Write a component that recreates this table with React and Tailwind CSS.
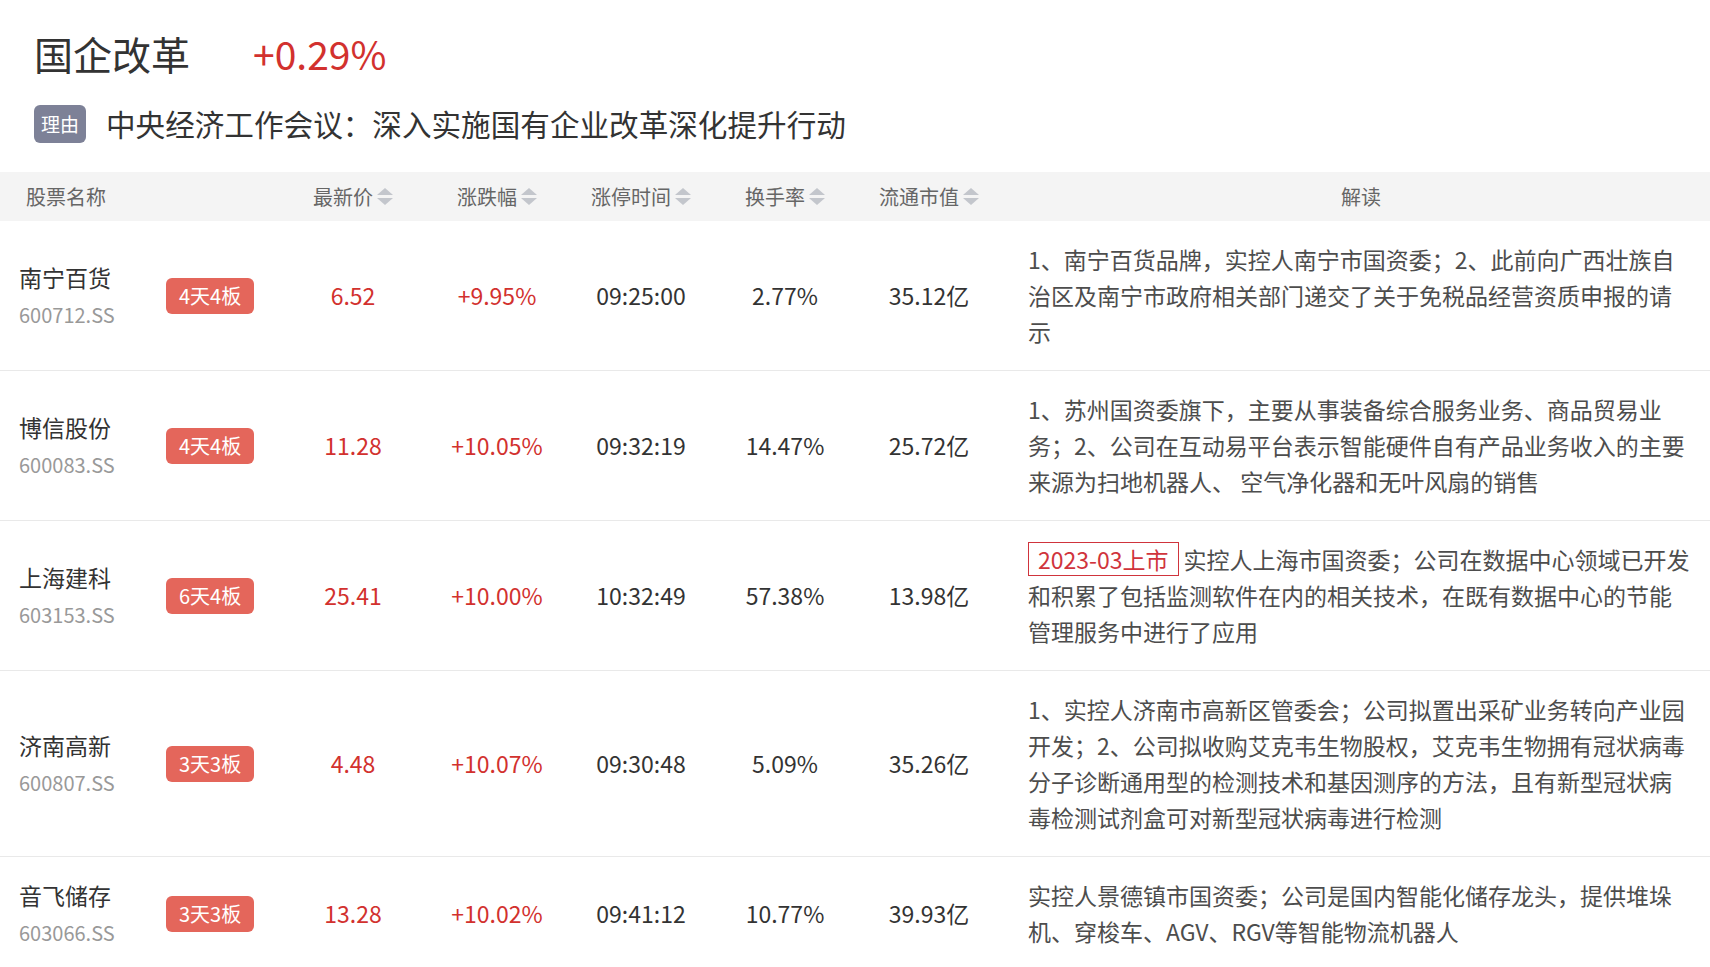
import React from 'react';

const stocks = [
  { name: '南宁百货', code: '600712.SS', tag: '4天4板', price: '6.52', change: '+9.95%', time: '09:25:00', turnover: '2.77%', cap: '35.12亿', note: '1、南宁百货品牌，实控人南宁市国资委；2、此前向广西壮族自治区及南宁市政府相关部门递交了关于免税品经营资质申报的请示' },
  { name: '博信股份', code: '600083.SS', tag: '4天4板', price: '11.28', change: '+10.05%', time: '09:32:19', turnover: '14.47%', cap: '25.72亿', note: '1、苏州国资委旗下，主要从事装备综合服务业务、商品贸易业务；2、公司在互动易平台表示智能硬件自有产品业务收入的主要来源为扫地机器人、 空气净化器和无叶风扇的销售' },
  { name: '上海建科', code: '603153.SS', tag: '6天4板', price: '25.41', change: '+10.00%', time: '10:32:49', turnover: '57.38%', cap: '13.98亿', listed: '2023-03上市', note: '实控人上海市国资委；公司在数据中心领域已开发和积累了包括监测软件在内的相关技术，在既有数据中心的节能管理服务中进行了应用' },
  { name: '济南高新', code: '600807.SS', tag: '3天3板', price: '4.48', change: '+10.07%', time: '09:30:48', turnover: '5.09%', cap: '35.26亿', note: '1、实控人济南市高新区管委会；公司拟置出采矿业务转向产业园开发；2、公司拟收购艾克韦生物股权，艾克韦生物拥有冠状病毒分子诊断通用型的检测技术和基因测序的方法，且有新型冠状病毒检测试剂盒可对新型冠状病毒进行检测' },
  { name: '音飞储存', code: '603066.SS', tag: '3天3板', price: '13.28', change: '+10.02%', time: '09:41:12', turnover: '10.77%', cap: '39.93亿', note: '实控人景德镇市国资委；公司是国内智能化储存龙头，提供堆垛机、穿梭车、AGV、RGV等智能物流机器人' },
];

const sortable = ['最新价', '涨跌幅', '涨停时间', '换手率', '流通市值'];

const cols = 'grid grid-cols-[150px_131px_144px_144px_144px_144px_144px_1fr]';

function SortIcon() {
  return (
    <svg width="16" height="18" viewBox="0 0 16 18" className="ml-[4px] shrink-0">
      <polygon points="8,0 16,7 0,7" fill="#c3c6cc" />
      <polygon points="0,10 16,10 8,17" fill="#c3c6cc" />
    </svg>
  );
}

export default function App() {
  return (
    <div className="min-h-screen bg-white font-['Noto_Sans_CJK_SC','Noto_Sans',sans-serif] text-[#333]">
      {/* title */}
      <div className="px-[34px] pt-[33px]">
        <div className="flex items-center h-[40px]">
          <h1 className="text-[39px] leading-[40px] text-[#333]">国企改革</h1>
          <span className="ml-[63px] text-[39px] leading-[40px] text-[#d2312e]">+0.29%</span>
        </div>
        <div className="flex items-center mt-[32px] h-[38px]">
          <span className="w-[52px] h-[38px] rounded-[6px] bg-[#7d8197] text-white text-[19px] flex items-center justify-center">理由</span>
          <span className="ml-[20px] text-[29.6px] leading-[38px] text-[#333]">中央经济工作会议：深入实施国有企业改革深化提升行动</span>
        </div>
      </div>

      {/* table */}
      <div className="mt-[29px]">
        <div className={`${cols} h-[49px] bg-[#f4f4f4] text-[20px] text-[#666] items-center`}>
          <div className="pl-[26px]">股票名称</div>
          <div />
          {sortable.map((h) => (
            <div key={h} className="flex items-center justify-center">
              <span>{h}</span>
              <SortIcon />
            </div>
          ))}
          <div className="pl-[27px] pr-[16px] text-center">解读</div>
        </div>

        {stocks.map((s) => (
          <div key={s.code} className={`${cols} items-center border-b border-[#e9e9e9] text-[23px]`}>
            <div className="pl-[19px] leading-[36px]">
              <div className="text-[#333]">{s.name}</div>
              <div className="mt-[2px] text-[20px] text-[#999]">{s.code}</div>
            </div>
            <div className="pl-[16px]">
              <span className="inline-flex items-center h-[36px] px-[13px] rounded-[6px] bg-[#e4665b] text-white text-[20px]">{s.tag}</span>
            </div>
            <div className="text-center text-[#d2312e]">{s.price}</div>
            <div className="text-center text-[#d2312e]">{s.change}</div>
            <div className="text-center">{s.time}</div>
            <div className="text-center">{s.turnover}</div>
            <div className="text-center">{s.cap}</div>
            <div className="pl-[27px] pr-[20px] pt-[20px] pb-[21px] leading-[36px] text-[#4d4d4d]">
              {s.listed && (
                <span className="inline-block border border-[#d0343c] text-[#d0343c] px-[9px] leading-[32px] mr-[5px]">{s.listed}</span>
              )}
              {s.note}
            </div>
          </div>
        ))}
      </div>
    </div>
  );
}
